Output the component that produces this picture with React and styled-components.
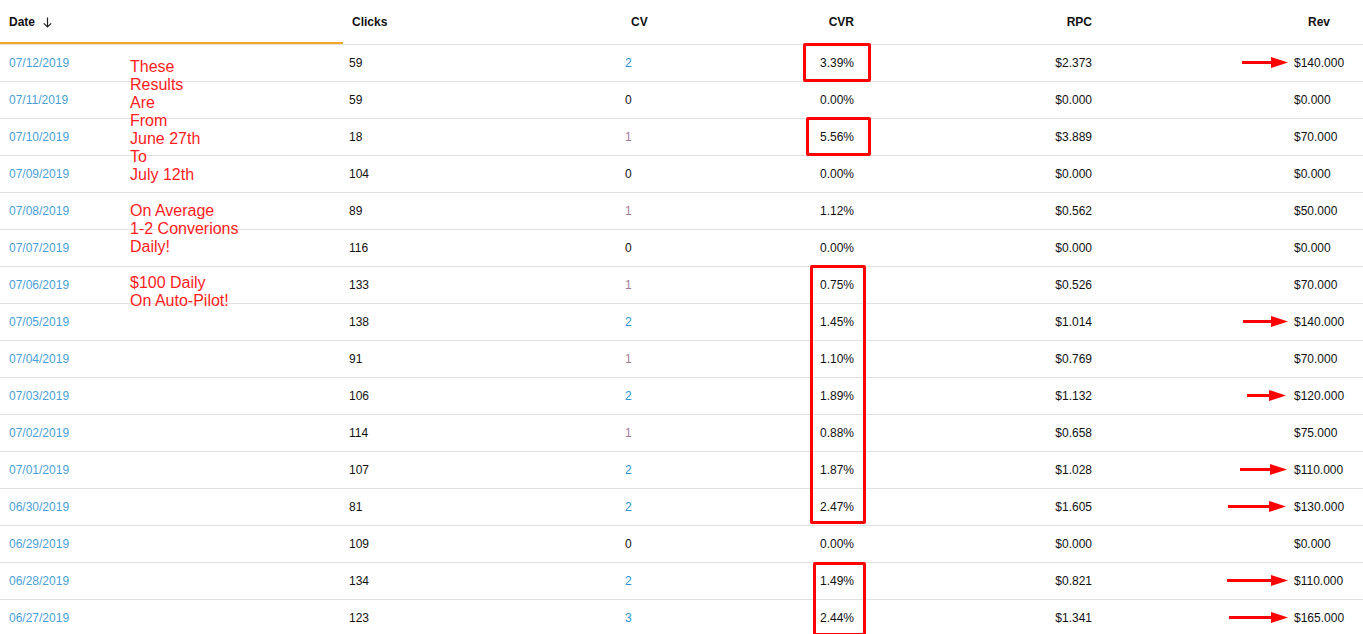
import React from "react";
import styled, { createGlobalStyle } from "styled-components";

const GlobalStyle = createGlobalStyle`
  html, body {
    margin: 0;
    padding: 0;
    background: #fff;
    font-family: "Liberation Sans", Arial, sans-serif;
    overflow: hidden;
  }
`;

const COLS = "343px 257px 100px 170px 240px 253px";

const columns = [
  { key: "date", label: "Date", head: { align: "left", pad: "2px 0 0 9px" }, body: { align: "left", pad: "0 0 0 9px" } },
  { key: "clicks", label: "Clicks", head: { align: "left", pad: "2px 0 0 9px" }, body: { align: "left", pad: "0 0 0 6px" } },
  { key: "cv", label: "CV", head: { align: "left", pad: "2px 0 0 31px" }, body: { align: "left", pad: "0 0 0 25px" } },
  { key: "cvr", label: "CVR", head: { align: "right", pad: "2px 16px 0 0" }, body: { align: "right", pad: "0 16px 0 0" } },
  { key: "rpc", label: "RPC", head: { align: "right", pad: "2px 18px 0 0" }, body: { align: "right", pad: "0 18px 0 0" } },
  { key: "rev", label: "Rev", head: { align: "right", pad: "2px 33px 0 0" }, body: { align: "left", pad: "0 0 0 184px" } },
];

const rows = [
  ["07/12/2019", 59, 2, "3.39%", "$2.373", "$140.000", [1242, 1288]],
  ["07/11/2019", 59, 0, "0.00%", "$0.000", "$0.000"],
  ["07/10/2019", 18, 1, "5.56%", "$3.889", "$70.000"],
  ["07/09/2019", 104, 0, "0.00%", "$0.000", "$0.000"],
  ["07/08/2019", 89, 1, "1.12%", "$0.562", "$50.000"],
  ["07/07/2019", 116, 0, "0.00%", "$0.000", "$0.000"],
  ["07/06/2019", 133, 1, "0.75%", "$0.526", "$70.000"],
  ["07/05/2019", 138, 2, "1.45%", "$1.014", "$140.000", [1243, 1288]],
  ["07/04/2019", 91, 1, "1.10%", "$0.769", "$70.000"],
  ["07/03/2019", 106, 2, "1.89%", "$1.132", "$120.000", [1247, 1286]],
  ["07/02/2019", 114, 1, "0.88%", "$0.658", "$75.000"],
  ["07/01/2019", 107, 2, "1.87%", "$1.028", "$110.000", [1240, 1287]],
  ["06/30/2019", 81, 2, "2.47%", "$1.605", "$130.000", [1228, 1286]],
  ["06/29/2019", 109, 0, "0.00%", "$0.000", "$0.000"],
  ["06/28/2019", 134, 2, "1.49%", "$0.821", "$110.000", [1227, 1288]],
  ["06/27/2019", 123, 3, "2.44%", "$1.341", "$165.000", [1229, 1288]],
];

// red highlight boxes, relative to table body
const boxes = [
  { left: 803, top: -2, width: 68, height: 39 },
  { left: 806, top: 72, width: 65, height: 39 },
  { left: 810, top: 220, width: 56, height: 259 },
  { left: 813, top: 517, width: 53, height: 74 },
];

const note = [
  "These", "Results", "Are", "From", "June 27th", "To", "July 12th", "",
  "On Average", "1-2 Converions", "Daily!", "",
  "$100 Daily", "On Auto-Pilot!",
];

const Page = styled.div`
  width: 1363px;
  height: 634px;
  overflow: hidden;
  color: #111;
`;

const HeadRow = styled.div`
  display: grid;
  grid-template-columns: ${COLS};
  height: 45px;
  border-bottom: 1px solid #e0e0e0;
  box-sizing: border-box;
`;

const HeadCell = styled.div`
  display: flex;
  align-items: center;
  justify-content: ${(p) => (p.$align === "right" ? "flex-end" : "flex-start")};
  padding: ${(p) => p.$pad};
  font-size: 12px;
  font-weight: 700;
  color: #111;
  box-sizing: border-box;
  border-bottom: 2px solid ${(p) => (p.$active ? "#f5a623" : "transparent")};
  height: 44px;
`;

const SortIcon = styled.svg`
  margin-left: 8px;
  width: 9px;
  height: 11px;
`;

const Body = styled.div`
  position: relative;
`;

const Row = styled.div`
  display: grid;
  grid-template-columns: ${COLS};
  height: 37px;
  border-top: 1px solid #e0e0e0;
  box-sizing: border-box;
  &:first-child {
    border-top: none;
    height: 36px;
  }
`;

const Cell = styled.div`
  position: relative;
  display: flex;
  align-items: center;
  justify-content: ${(p) => (p.$align === "right" ? "flex-end" : "flex-start")};
  padding: ${(p) => p.$pad};
  font-size: 12px;
  color: ${(p) => p.$color || "#111"};
`;

const ArrowSvg = styled.svg`
  position: absolute;
  top: 50%;
  margin-top: -7px;
  height: 12px;
`;

const Box = styled.div`
  position: absolute;
  border: 3px solid #ff0000;
  border-radius: 2px;
  box-sizing: border-box;
  pointer-events: none;
`;

const Note = styled.div`
  position: absolute;
  left: 130px;
  top: 13px;
  color: #ff1c1c;
  font-size: 16px;
  line-height: 18px;
  white-space: nowrap;
`;

const NoteLine = styled.div`
  height: 18px;
`;

function Arrow({ from, to }) {
  const w = to - from;
  return (
    <ArrowSvg
      viewBox={`0 0 ${w} 12`}
      width={w}
      style={{ left: from - 1110 }}
    >
      <path d={`M0 6.5 H${w - 16}`} stroke="#ff0000" strokeWidth="3" strokeLinecap="round" />
      <path d={`M${w - 17} 1 L${w} 6.5 L${w - 17} 12 Z`} fill="#ff0000" />
    </ArrowSvg>
  );
}

function cvColor(v) {
  if (v === 0) return "#111";
  if (v === 1) return "#a87a98";
  return "#2c92d2";
}

export default function App() {
  return (
    <Page>
      <GlobalStyle />
      <HeadRow>
        {columns.map((c) => (
          <HeadCell key={c.key} $align={c.head.align} $pad={c.head.pad} $active={c.key === "date"}>
            {c.label}
            {c.key === "date" && (
              <SortIcon viewBox="0 0 9 11">
                <path d="M4.5 0.5 V10 M0.8 6.3 L4.5 10 L8.2 6.3" fill="none" stroke="#222" strokeWidth="1.2" />
              </SortIcon>
            )}
          </HeadCell>
        ))}
      </HeadRow>
      <Body>
        {rows.map((r) => (
          <Row key={r[0]}>
            <Cell $align="left" $pad={columns[0].body.pad} $color="#4a9fd8">{r[0]}</Cell>
            <Cell $align="left" $pad={columns[1].body.pad}>{r[1]}</Cell>
            <Cell $align="left" $pad={columns[2].body.pad} $color={cvColor(r[2])}>{r[2]}</Cell>
            <Cell $align="right" $pad={columns[3].body.pad}>{r[3]}</Cell>
            <Cell $align="right" $pad={columns[4].body.pad}>{r[4]}</Cell>
            <Cell $align="left" $pad={columns[5].body.pad}>
              {r[6] && <Arrow from={r[6][0]} to={r[6][1]} />}
              {r[5]}
            </Cell>
          </Row>
        ))}
        {boxes.map((b, i) => (
          <Box key={i} style={{ left: b.left, top: b.top, width: b.width, height: b.height }} />
        ))}
        <Note>
          {note.map((t, i) => (
            <NoteLine key={i}>{t}</NoteLine>
          ))}
        </Note>
      </Body>
    </Page>
  );
}
